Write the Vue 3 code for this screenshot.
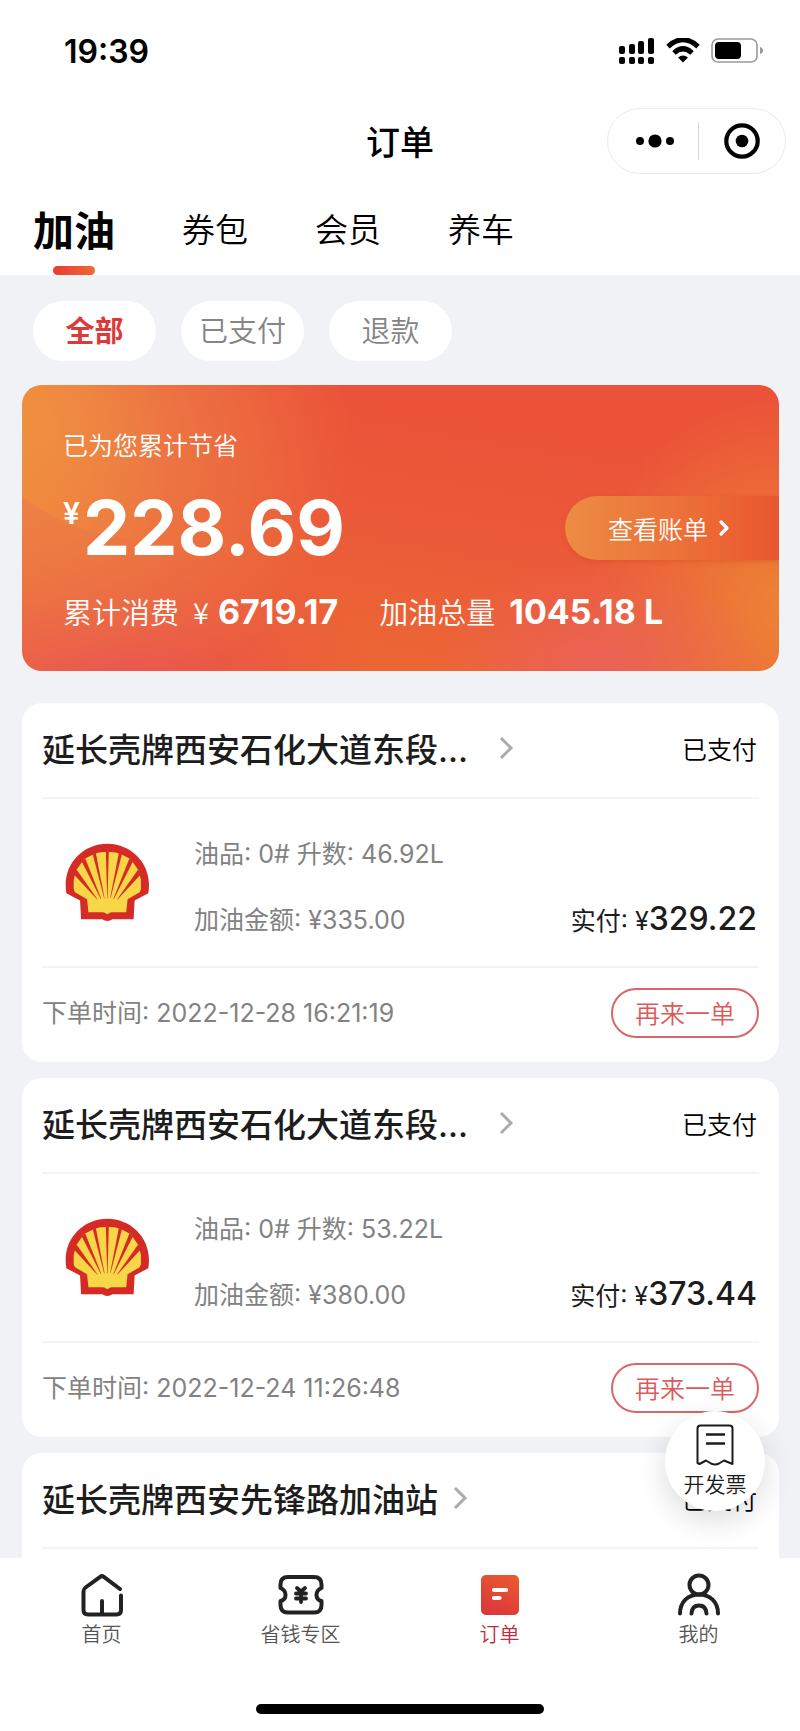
<script setup>
import { ref } from 'vue'

const tabs = ['加油', '券包', '会员', '养车']
const filters = ['全部', '已支付', '退款']
const activeTab = ref('加油')
const activeFilter = ref('全部')

const orders = [
  {
    id: 1,
    station: '延长壳牌西安石化大道东段...',
    truncated: true,
    status: '已支付',
    detail: { fuel: '0#', litres: '46.92L', amount: '¥335.00', paid: '329.22', time: '2022-12-28 16:21:19' }
  },
  {
    id: 2,
    station: '延长壳牌西安石化大道东段...',
    truncated: true,
    status: '已支付',
    detail: { fuel: '0#', litres: '53.22L', amount: '¥380.00', paid: '373.44', time: '2022-12-24 11:26:48' }
  },
  { id: 3, station: '延长壳牌西安先锋路加油站', truncated: false, status: '已支付', detail: null }
]

const rays = [
  'M168 64L177 64L173 206L172 206Z',
  'M129 74L138 69L164 204L163 205Z',
  'M96 95L106 85L154 206L153 207Z',
  'M72 133L81 120L143 208L142 209Z',
  'M216 74L207 69L181 204L182 205Z',
  'M249 95L239 85L191 206L192 207Z',
  'M273 133L264 120L202 208L203 209Z'
]
</script>

<template>
  <div class="app">
    <header class="top">
      <div class="statusbar">
        <span class="clock">19:39</span>
        <div class="indicators">
          <svg width="36" height="26" viewBox="0 0 36 26" aria-hidden="true">
            <rect x="0" y="8" width="6" height="8" rx="2" />
            <rect x="10" y="6" width="6" height="10" rx="2" />
            <rect x="19" y="3" width="6" height="13" rx="2" />
            <rect x="29" y="0" width="6" height="16" rx="2" />
            <rect x="0" y="19" width="6" height="7" rx="2" />
            <rect x="10" y="19" width="6" height="7" rx="2" />
            <rect x="19" y="19" width="6" height="7" rx="2" />
            <rect x="29" y="19" width="6" height="7" rx="2" />
          </svg>
          <svg width="34" height="26" viewBox="0 0 34 26" aria-hidden="true">
            <path d="M2 8.600Q17-5.400 32 8.600" fill="none" stroke="#000" stroke-width="5" />
            <path d="M8 15Q17 6.500 26 15" fill="none" stroke="#000" stroke-width="5" />
            <path d="M12 19.500Q17 15.500 22 19.500L17 24.500Z" />
          </svg>
          <svg width="52" height="26" viewBox="0 0 52 26" aria-hidden="true">
            <rect x="1" y="1" width="45" height="23" rx="6" fill="none" stroke="#999" stroke-width="1.600" />
            <rect x="4" y="4" width="26" height="17" rx="4" />
            <path d="M49 9Q52 10 52 12.500T49 16Z" fill="#999" />
          </svg>
        </div>
      </div>

      <div class="navbar">
        <h1>订单</h1>
        <div class="capsule">
          <button type="button" aria-label="更多">
            <svg width="40" height="16" viewBox="0 0 40 16" aria-hidden="true">
              <circle cx="5" cy="8" r="4" /><circle cx="20" cy="8" r="6.600" /><circle cx="35" cy="8" r="4" />
            </svg>
          </button>
          <span class="split"></span>
          <button type="button" aria-label="关闭">
            <svg width="36" height="36" viewBox="0 0 36 36" aria-hidden="true">
              <circle cx="18" cy="18" r="15.700" fill="none" stroke="#000" stroke-width="4.200" />
              <circle cx="18" cy="18" r="6.300" />
            </svg>
          </button>
        </div>
      </div>

      <nav class="tabs">
        <button
          v-for="t in tabs"
          :key="t"
          type="button"
          :class="['tab', { active: t === activeTab }]"
          @click="activeTab = t"
        >{{ t }}</button>
      </nav>
    </header>

    <main>
      <div class="scroller">
        <div class="filters">
          <button
            v-for="f in filters"
            :key="f"
            type="button"
            :class="['chip', { active: f === activeFilter }]"
            @click="activeFilter = f"
          >{{ f }}</button>
        </div>

        <section class="summary">
          <p class="caption">已为您累计节省</p>
          <div class="saved">
            <p class="amount"><span class="yen">¥</span>228.69</p>
            <button type="button" class="bill">
              查看账单
              <svg width="12" height="18" viewBox="0 0 12 18" aria-hidden="true">
                <path d="M3 3L9 9L3 15" fill="none" stroke="#fff" stroke-width="3.200" stroke-linecap="round" stroke-linejoin="round" />
              </svg>
            </button>
          </div>
          <div class="totals">
            <p>累计消费<span class="sign">¥</span><strong>6719.17</strong></p>
            <p>加油总量<strong class="litres">1045.18 L</strong></p>
          </div>
        </section>

        <article v-for="o in orders" :key="o.id" class="order">
          <div class="head">
            <h2>{{ o.station }}</h2>
            <svg :class="['arrow', { far: o.truncated }]" width="16" height="24" viewBox="0 0 16 24" aria-hidden="true">
              <path d="M3 2L13 12L3 22" fill="none" stroke="#ababab" stroke-width="3" />
            </svg>
            <span class="state">{{ o.status }}</span>
          </div>
          <template v-if="o.detail">
            <div class="body">
              <svg class="logo" viewBox="46 40 254 236" role="img" aria-label="Shell">
                <path d="M94 268L91 212L50 190Q48 180 48 165C48 95 105 42 172.500 42S297 95 297 165Q297 180 295 190L254 212L251 268H188Q172.500 278 157 268Z" fill="#d52b26" />
                <path d="M116 247L112 208L76 187L72 178V150L80 121L103 88L133 73Q150 66 168 67H177Q195 66 212 73L242 88L265 121L273 150V178L269 187L233 208L229 247H187Q180 247 178 250Q172.500 254 167 250Q165 247 158 247Z" fill="#f7d648" />
                <path v-for="r in rays" :key="r" :d="r" fill="#d52b26" />
              </svg>
              <div class="info">
                <p>油品: {{ o.detail.fuel }} 升数: {{ o.detail.litres }}</p>
                <p>加油金额: {{ o.detail.amount }}</p>
              </div>
              <p class="paid">实付: ¥<strong>{{ o.detail.paid }}</strong></p>
            </div>
            <div class="foot">
              <span class="time">下单时间: {{ o.detail.time }}</span>
              <button type="button" class="again">再来一单</button>
            </div>
          </template>
        </article>
      </div>

      <button type="button" class="invoice">
        <svg width="38" height="42" viewBox="0 0 38 42" fill="none" stroke="#1c1c1c" stroke-width="2" stroke-linejoin="round" aria-hidden="true">
          <path d="M4.500 1.500H33.500Q36.500 1.500 36.500 4.500V40L28 36.500L23 39.500Q19 41.500 15 39.500L10 36.500L3.500 40L1.500 39V4.500Q1.500 1.500 4.500 1.500Z" />
          <path d="M10 10.500H29M10 19.500H29" stroke-width="2.500" />
        </svg>
        开发票
      </button>
    </main>

    <footer>
      <nav class="menu">
        <a href="#home">
          <svg width="44" height="44" viewBox="0 0 44 44" fill="none" stroke="#222" stroke-width="4" stroke-linecap="round" stroke-linejoin="round" aria-hidden="true">
            <path d="M40 16L23.500 3.700Q22 2.600 20.500 3.700L5.500 14.500Q3.500 16 3.500 18.500V37Q3.500 41.500 8 41.500H36.500Q41 41.500 41 37V22.500M22 40V28" />
          </svg>
          首页
        </a>
        <a href="#saving">
          <svg width="46" height="44" viewBox="0 0 46 44" fill="none" stroke="#222" stroke-width="4" stroke-linecap="round" stroke-linejoin="round" aria-hidden="true">
            <path d="M10 4H36Q43.500 4 43.500 11.500V15Q38.500 17 38.500 22T43.500 28V32Q43.500 39.500 36 39.500H10Q2.500 39.500 2.500 32V28Q7.500 27 7.500 22T2.500 15V11.500Q2.500 4 10 4Z" />
            <path d="M19 15L23 18.500L27 15M18 20.500H28M18 25.500H28M23 19V29" stroke-width="3.800" />
          </svg>
          省钱专区
        </a>
        <a href="#orders" class="current">
          <svg width="44" height="44" viewBox="0 0 44 44" aria-hidden="true">
            <defs>
              <linearGradient id="order-fill" x1="0.7" y1="0" x2="0.3" y2="1">
                <stop offset="0" stop-color="#e8592e" /><stop offset="1" stop-color="#dc363b" />
              </linearGradient>
            </defs>
            <rect x="3" y="2" width="38" height="40" rx="5" fill="url(#order-fill)" />
            <path d="M16 17H28M16 25H21.500" stroke="#fff" stroke-width="4.200" stroke-linecap="round" />
          </svg>
          订单
        </a>
        <a href="#me">
          <svg width="44" height="44" viewBox="0 0 44 44" fill="none" stroke="#222" stroke-width="4" stroke-linecap="round" aria-hidden="true">
            <circle cx="22" cy="12" r="9.500" />
            <path d="M3 40.500C3 29 11 21.500 22 21.500S41 29 41 40.500M14.500 40.500Q15 32.500 22 32.500T29.500 40.500" />
          </svg>
          我的
        </a>
      </nav>
      <div class="homebar"></div>
    </footer>
  </div>
</template>

<style>
body {
  background: #f1f2f6;
}
</style>

<style scoped>
.app {
  display: flex;
  flex-direction: column;
  height: 100vh;
  overflow: hidden;
  font-family: Inter, "Noto Sans CJK SC", sans-serif;
  font-size: 25px;
  font-weight: 350;
  color: #000;
  background: #f1f2f6;
}

h1, h2, p {
  margin: 0;
}

button {
  padding: 0;
  border: 0;
  background: none;
  font: inherit;
  color: inherit;
  cursor: pointer;
}

svg {
  display: block;
  flex: none;
}

.top {
  flex: none;
  background: #fff;
}

.statusbar {
  display: flex;
  align-items: center;
  justify-content: space-between;
  height: 102px;
  padding: 0 37px 0 64px;
}

.clock {
  font-size: 32px;
  font-weight: 600;
}

.indicators {
  display: flex;
  gap: 11px;
}

.navbar {
  display: grid;
  grid-template-columns: 1fr auto 1fr;
  align-items: center;
  height: 78px;
  padding: 0 14px;
}

h1 {
  grid-column: 2;
  padding-bottom: 2px;
  font-size: 34px;
  font-weight: 500;
}

.capsule {
  justify-self: end;
  display: flex;
  align-items: center;
  box-sizing: border-box;
  width: 179px;
  height: 66px;
  padding-left: 4px;
  border: 1px solid #ebebeb;
  border-radius: 33px;
}

.capsule button {
  flex: 1;
  display: flex;
  justify-content: center;
}

.split {
  width: 1px;
  height: 38px;
  background: #d8d8d8;
}

.tabs {
  display: flex;
  align-items: center;
  gap: 67px;
  height: 95px;
  padding: 0 33px;
}

.tab {
  position: relative;
  height: 95px;
  font-size: 33px;
}

.tab.active {
  font-size: 41px;
  font-weight: 700;
}

.tab.active::after {
  content: "";
  position: absolute;
  bottom: 0;
  left: 50%;
  width: 42px;
  height: 9px;
  margin-left: -21px;
  border-radius: 5px;
  background: linear-gradient(90deg, #e83c33, #ee6a34);
}

main {
  position: relative;
  flex: 1;
  min-height: 0;
}

.scroller {
  box-sizing: border-box;
  height: 100%;
  padding: 0 21px 16px 22px;
  overflow-y: auto;
  scrollbar-width: none;
}

.filters {
  display: flex;
  gap: 25px;
  padding: 26px 11px 24px;
}

.chip {
  width: 123px;
  height: 60px;
  padding-bottom: 4px;
  border-radius: 30px;
  background: #fff;
  font-size: 29px;
  color: #858585;
}

.chip.active {
  font-weight: 700;
  color: #dc3a39;
}

.summary {
  position: relative;
  z-index: 0;
  box-sizing: border-box;
  height: 286px;
  padding: 43px 0 0 41px;
  border-radius: 20px;
  overflow: hidden;
  color: #fff;
  background:
    radial-gradient(ellipse 330px 300px at 0 40px, rgba(238, 146, 76, 0.900), rgba(238, 130, 76, 0)),
    radial-gradient(ellipse 260px 140px at 90px 290px, rgba(233, 76, 84, 0.850), rgba(233, 76, 84, 0)),
    radial-gradient(ellipse 170px 120px at 580px 290px, rgba(234, 98, 94, 0.850), rgba(234, 98, 94, 0)),
    radial-gradient(ellipse 190px 210px at 100% 220px, #ed8236, rgba(237, 112, 52, 0)),
    linear-gradient(190deg, #eb5238 20%, #eb5a39 50%, #ec6534 80%);
}

.summary::before {
  content: "";
  position: absolute;
  z-index: -1;
  top: -266px;
  left: -84px;
  width: 420px;
  height: 420px;
  border-radius: 50%;
  background: linear-gradient(90deg, rgba(242, 150, 50, 0.450) 20%, rgba(242, 140, 50, 0) 54%);
}

.caption {
  line-height: 36px;
}

.saved {
  display: flex;
  align-items: center;
  justify-content: space-between;
  height: 98px;
  margin-top: 15px;
}

.amount {
  display: flex;
  font-size: 75px;
  font-weight: 700;
  line-height: 90px;
}

.yen {
  margin-right: 3px;
  font-size: 30px;
  line-height: 60px;
  font-weight: 600;
}

.bill {
  display: flex;
  align-items: center;
  gap: 10px;
  height: 64px;
  padding: 0 49px 0 43px;
  border-radius: 32px 0 0 32px;
  background: linear-gradient(90deg, #ec8b43, #ec7038 55%, #e9562f);
  box-shadow: 0 2px 5px rgba(200, 60, 20, 0.250);
}

.totals {
  display: flex;
  align-items: baseline;
  gap: 41px;
  margin-top: 12px;
  font-size: 29px;
  line-height: 44px;
}

.totals strong {
  font-size: 34px;
  font-weight: 700;
}

.totals .sign {
  margin: 0 9px 0 14px;
  font-family: "Noto Sans CJK SC", sans-serif;
}

.totals .litres {
  margin-left: 14px;
}

.order {
  box-sizing: border-box;
  min-height: 359px;
  margin-top: 16px;
  padding: 0 20px;
  border-radius: 20px;
  background: #fff;
}

.summary + .order {
  margin-top: 32px;
}

.head {
  display: flex;
  align-items: center;
  box-sizing: border-box;
  height: 96px;
  padding-bottom: 4px;
  border-bottom: 2px solid #f4f4f5;
}

h2 {
  font-size: 33px;
  font-weight: 500;
  color: #1d1d1d;
  white-space: nowrap;
}

.arrow {
  margin-left: 14px;
}

.arrow.far {
  margin-left: 30px;
}

.state {
  margin-left: auto;
  padding-right: 2px;
}

.body {
  display: flex;
  align-items: center;
  height: 167px;
  border-bottom: 2px solid #f4f4f5;
}

.logo {
  width: 85px;
  height: 79px;
  margin-left: 23px;
}

.info {
  display: grid;
  gap: 26px;
  margin-left: 44px;
  padding-top: 9px;
  font-weight: 400;
  line-height: 40px;
  color: #828282;
}

.paid {
  align-self: flex-end;
  margin-left: auto;
  padding: 0 2px 23px 0;
  font-weight: 400;
  line-height: 44px;
  color: #1c1c1c;
}

.paid strong {
  font-size: 32px;
  font-weight: 500;
}

.foot {
  display: flex;
  align-items: center;
  justify-content: space-between;
  height: 89px;
}

.time {
  padding-bottom: 3px;
  font-weight: 400;
  color: #828282;
}

.again {
  width: 148px;
  height: 50px;
  padding-bottom: 2px;
  border: 2px solid #d9666a;
  border-radius: 25px;
  color: #dc5a5c;
}

.invoice {
  position: absolute;
  right: 35px;
  bottom: 47px;
  display: flex;
  flex-direction: column;
  align-items: center;
  gap: 3px;
  box-sizing: border-box;
  width: 100px;
  height: 100px;
  padding-top: 13px;
  border-radius: 50%;
  background: #fff;
  box-shadow: 0 10px 30px rgba(0, 0, 0, 0.140);
  font-size: 21px;
  line-height: 32px;
  color: #1c1c1c;
}

footer {
  flex: none;
  background: #fff;
}

.menu {
  display: flex;
  padding: 15px 2px 0;
}

.menu a {
  flex: 1;
  display: flex;
  flex-direction: column;
  align-items: center;
  gap: 3px;
  font-size: 20px;
  line-height: 30px;
  color: #555;
  text-decoration: none;
}

.menu .current {
  color: #bf2b40;
}

.homebar {
  width: 36%;
  height: 10px;
  margin: 54px auto 17px;
  border-radius: 5px;
  background: #000;
}
</style>
